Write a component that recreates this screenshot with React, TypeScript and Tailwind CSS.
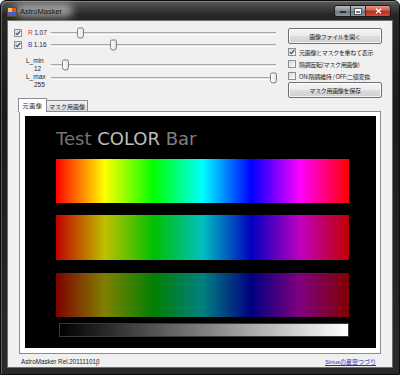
import React from "react";

// small win7 style pieces
function CheckBox({ checked }: { checked: boolean }) {
  return (
    <span className="w-[8px] h-[8px] shrink-0 border border-[#8e8f8f] bg-[linear-gradient(135deg,#d6d6d6,#ffffff)] flex items-center justify-center">
      {checked && (
        <svg width="6" height="6" viewBox="0 0 6 6">
          <path d="M0.7 3.1 L2.3 4.7 L5.3 1" stroke="#3b4d78" strokeWidth="1.2" fill="none" />
        </svg>
      )}
    </span>
  );
}

function Slider({ pos, h }: { pos: number; h: string }) {
  return (
    <div className={`relative w-[225px] ${h} flex items-center shrink-0`}>
      <div className="w-full h-[3px] border-t border-[#a9a9a9] border-b border-b-white bg-[#e3e3e3]" />
      <div
        className="absolute top-1/2 -translate-y-1/2 -ml-[3px] w-[7px] h-[11px] border border-[#7c7c7c] rounded-t-[2px] rounded-b-[3px] bg-[linear-gradient(to_right,#ffffff,#e2e2e2)]"
        style={{ left: pos }}
      />
    </div>
  );
}

function WinButton({ label }: { label: string }) {
  return (
    <div className="h-[16px] w-full rounded-[2px] border border-[#707070] bg-[linear-gradient(to_bottom,#f3f3f3_0%,#ebebeb_48%,#dddddd_52%,#cfcfcf_100%)] shadow-[inset_0_0_0_1px_rgba(255,255,255,0.75)] flex items-center justify-center font-['Noto_Sans_CJK_JP',sans-serif] text-[6px] tracking-[-0.3px] text-[#1e1e1e]">
      {label}
    </div>
  );
}

function Option({ checked, label }: { checked: boolean; label: string }) {
  return (
    <div className="h-[12px] flex items-center gap-[3px]">
      <CheckBox checked={checked} />
      <span className="font-['Noto_Sans_CJK_JP',sans-serif] text-[6px] tracking-[-0.3px] text-[#1e1e1e] whitespace-nowrap">
        {label}
      </span>
    </div>
  );
}

export default function App() {
  return (
    <div className="w-[400px] h-[375px] flex flex-col rounded-t-[6px] border border-[#0c0c0c] bg-[linear-gradient(to_bottom,#5a5a5a_0px,#262626_14px,#1b1b1b_30%,#2a2a2a_100%)] shadow-[inset_1px_1px_0_rgba(255,255,255,0.25)] font-['Liberation_Sans','Noto_Sans_CJK_JP',sans-serif]">
      {/* Title bar */}
      <div className="relative h-[19px] flex items-start pl-[6px] pr-[8px] shrink-0">
        <div className="absolute left-[14px] top-[3px] w-[58px] h-[13px] rounded-full bg-[#d0d0d0]/70 blur-[4px]" />
        <svg width="10" height="10" viewBox="0 0 10 10" className="relative mt-[6px]">
          <rect x="0.5" y="0.5" width="9" height="9" fill="#3a63c9" stroke="#5a4a2a" />
          <rect x="1" y="1" width="8" height="4" fill="#f2c23a" />
          <rect x="5" y="1" width="4" height="4" fill="#e0542c" />
          <rect x="1" y="6" width="3" height="3" fill="#8a3fb0" />
        </svg>
        <span className="relative ml-[3px] mt-[6px] text-[7.5px] leading-[10px] text-[#111]">AstroMasker</span>
        <div className="ml-auto mt-[4px] flex h-[12px] rounded-[3px] border border-[#1a1a1a] overflow-hidden">
          <div className="w-[16px] flex items-end justify-center pb-[3px] border-r border-[#2c2c2c] bg-[linear-gradient(to_bottom,#b9bec5,#858c95_50%,#6e757e_51%,#8d949c)]">
            <div className="w-[6px] h-[2px] bg-white border border-[#333]" />
          </div>
          <div className="w-[15px] flex items-center justify-center border-r border-[#2c2c2c] bg-[linear-gradient(to_bottom,#b9bec5,#858c95_50%,#6e757e_51%,#8d949c)]">
            <div className="w-[6px] h-[5px] border border-white border-t-2 outline outline-[#333]/60" />
          </div>
          <div className="w-[24px] flex items-center justify-center bg-[linear-gradient(to_bottom,#e59a8a,#c9503a_50%,#b12c18_51%,#d0503a)]">
            <svg width="7" height="6" viewBox="0 0 7 6">
              <path d="M1 0.8 L6 5.2 M6 0.8 L1 5.2" stroke="#fff" strokeWidth="1.4" />
            </svg>
          </div>
        </div>
      </div>

      {/* Client area */}
      <div className="mx-[6px] h-[348px] border border-[#6f6f6f] bg-[#f0f0f0] flex flex-col text-[#1e1e1e]">
        {/* Controls */}
        <div className="h-[77px] flex shrink-0">
          <div className="pl-[6px] pt-[6px] flex flex-col">
            <div className="h-[12px] flex items-center">
              <div className="w-[37px] flex items-center">
                <CheckBox checked />
                <span className="ml-[6px] text-[6.5px] text-[#d23a3a]">R</span>
                <span className="ml-[1.5px] text-[6.5px]">1.07</span>
              </div>
              <Slider pos={29} h="h-[12px]" />
            </div>
            <div className="h-[12px] flex items-center">
              <div className="w-[37px] flex items-center">
                <CheckBox checked />
                <span className="ml-[6px] text-[6.5px] text-[#2f3fb0]">B</span>
                <span className="ml-[1.5px] text-[6.5px]">1.16</span>
              </div>
              <Slider pos={62} h="h-[12px]" />
            </div>
            <div className="mt-[6px] h-[16px] flex items-start">
              <div className="w-[37px] pl-[12px] text-[6.5px] leading-[8px]">
                <div>L_min</div>
                <div className="pl-[8px]">12</div>
              </div>
              <Slider pos={14} h="h-[16px]" />
            </div>
            <div className="h-[16px] flex items-start">
              <div className="w-[37px] pl-[12px] text-[6.5px] leading-[8px]">
                <div>L_max</div>
                <div className="pl-[8px]">255</div>
              </div>
              <Slider pos={222} h="h-[10px]" />
            </div>
          </div>

          <div className="ml-[12px] w-[94px] pt-[7px] flex flex-col">
            <WinButton label="画像ファイルを開く" />
            <div className="mt-[2px] flex flex-col">
              <Option checked label="元画像とマスクを重ねて表示" />
              <Option checked={false} label="階調反転(マスク用画像)" />
              <Option checked={false} label="ON:階調維持 / OFF:二値変換" />
            </div>
            <WinButton label="マスク用画像を保存" />
          </div>
        </div>

        {/* Tabs */}
        <div className="h-[13px] flex items-end pl-[10px] shrink-0 font-['Noto_Sans_CJK_JP',sans-serif] text-[6px]">
          <div className="relative z-10 -mb-[1px] w-[29px] h-[14px] bg-white border-x border-t border-[#898c95] rounded-t-[1px] flex items-center justify-center tracking-[0.6px]">
            元画像
          </div>
          <div className="w-[41px] h-[11px] border-t border-r border-[#898c95] bg-[linear-gradient(to_bottom,#f2f2f2,#dadada)] flex items-center justify-center">
            マスク用画像
          </div>
        </div>

        {/* Tab panel */}
        <div className="mx-[11px] h-[243px] shrink-0 border border-[#898c95] bg-white pl-[5px] pr-[4px] pt-[4px] pb-[5px]">
          <div className="w-full h-full bg-black pl-[31px] pt-[12px] flex flex-col">
            <div className="font-['DejaVu_Sans',sans-serif] text-[18px] leading-[22px] text-[#747474]">
              Test <span className="text-[#bdbdbd]">COLOR</span> <span className="text-[#808080]">Bar</span>
            </div>
            <div className="mt-[9px] w-[293px] h-[44px] blur-[0.4px] bg-[linear-gradient(to_right,#ff0000,#ffff00,#00ff00,#00ffff,#0000ff,#ff00ff,#ff0000)]" />
            <div className="mt-[12px] w-[293px] h-[45px] blur-[0.4px] bg-[linear-gradient(to_right,#c00000,#c0c000,#00c000,#00c0c0,#0000c0,#c000c0,#c00000)]" />
            <div className="mt-[13px] w-[293px] h-[44px] blur-[0.4px] bg-[linear-gradient(to_right,#800000,#808000,#008000,#008080,#000080,#800080,#800000)]" />
            <div className="mt-[6px] ml-[3px] w-[290px] h-[14px] border border-[#3a3a3a] bg-[linear-gradient(to_right,#000000,#ffffff)]" />
          </div>
        </div>

        {/* Status */}
        <div className="flex-1 flex items-center justify-between pl-[13px] pr-[16px] pt-[3px]">
          <span className="text-[6.3px] text-[#1e1e1e]">AstroMasker Rel.20111101β</span>
          <span className="text-[6px] text-[#2233bb] underline">Siriusの星空つづり</span>
        </div>
      </div>
    </div>
  );
}
